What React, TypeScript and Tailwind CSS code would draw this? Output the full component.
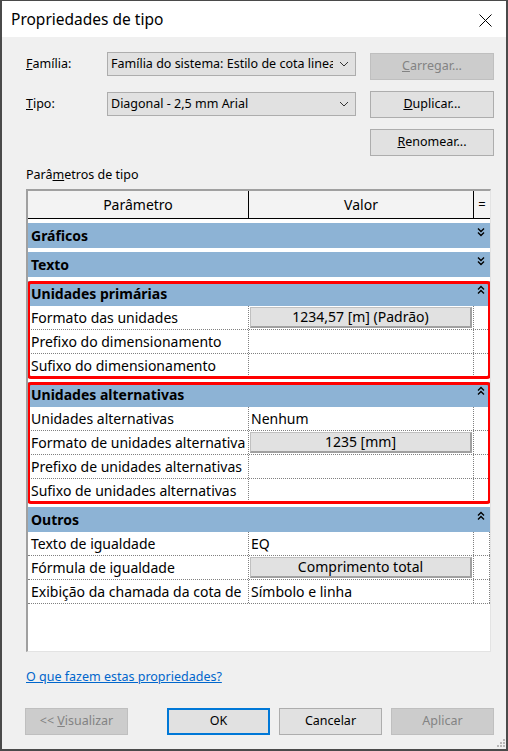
import React from 'react';

const font = { fontFamily: '"Segoe UI", "Noto Sans", sans-serif' };

type Row = { name: string; value?: string; button?: boolean };
type Group = { title: string; open: boolean; rows: Row[]; marked?: boolean };

// texts as the grid shows them (the narrow column cuts the long names)
const groups: Group[] = [
  { title: 'Gráficos', open: false, rows: [] },
  { title: 'Texto', open: false, rows: [] },
  {
    title: 'Unidades primárias',
    open: true,
    marked: true,
    rows: [
      { name: 'Formato das unidades', value: '1234,57 [m] (Padrão)', button: true },
      { name: 'Prefixo do dimensionamento' },
      { name: 'Sufixo do dimensionamento' },
    ],
  },
  {
    title: 'Unidades alternativas',
    open: true,
    marked: true,
    rows: [
      { name: 'Unidades alternativas', value: 'Nenhum' },
      { name: 'Formato de unidades alternativa', value: '1235 [mm]', button: true },
      { name: 'Prefixo de unidades alternativas' },
      { name: 'Sufixo de unidades alternativas' },
    ],
  },
  {
    title: 'Outros',
    open: true,
    rows: [
      { name: 'Texto de igualdade', value: 'EQ' },
      { name: 'Fórmula de igualdade', value: 'Comprimento total', button: true },
      { name: 'Exibição da chamada da cota de', value: 'Símbolo e linha' },
    ],
  },
];

const Chevrons = ({ up }: { up: boolean }) => (
  <svg width="8" height="10" viewBox="0 0 8 10" className="shrink-0">
    {up ? (
      <path d="M1 4.5 L4 1.5 L7 4.5 M1 8.5 L4 5.5 L7 8.5" fill="none" stroke="#000" strokeWidth="1.4" />
    ) : (
      <path d="M1 1.5 L4 4.5 L7 1.5 M1 5.5 L4 8.5 L7 5.5" fill="none" stroke="#000" strokeWidth="1.4" />
    )}
  </svg>
);

const Select = ({ text }: { text: string }) => (
  <div className="w-[249px] h-[24px] flex items-center bg-[#e1e1e1] border border-[#adadad] pl-[3px] pr-[6px]">
    <span className="flex-1 overflow-hidden whitespace-nowrap text-[12.5px] text-black">{text}</span>
    <svg width="10" height="6" viewBox="0 0 10 6" className="ml-[6px] shrink-0">
      <path d="M1 1 L5 5 L9 1" fill="none" stroke="#333" strokeWidth="1" />
    </svg>
  </div>
);

const Btn = ({ children, disabled, primary }: { children: React.ReactNode; disabled?: boolean; primary?: boolean }) => (
  <div
    className={`w-[103px] h-[27px] flex items-center justify-center text-[12.5px] ${
      disabled
        ? 'bg-[#cccccc] border border-[#bfbfbf] text-[#838383]'
        : primary
          ? 'bg-[#e1e1e1] border-2 border-[#0078d7] text-black'
          : 'bg-[#e1e1e1] border border-[#adadad] text-black'
    }`}
  >
    {children}
  </div>
);

const SideBtn = ({ children, disabled }: { children: React.ReactNode; disabled?: boolean }) => (
  <div
    className={`w-[124px] h-[27px] flex items-center justify-center text-[12.5px] ${
      disabled ? 'bg-[#cccccc] border border-[#bfbfbf] text-[#838383]' : 'bg-[#e1e1e1] border border-[#adadad] text-black'
    }`}
  >
    {children}
  </div>
);

const GroupBlock = ({ g }: { g: Group }) => (
  <div className="relative mt-[4px]">
    <div className="h-[25px] bg-[#8db3d5] flex items-start pl-[3px] pr-[5px]">
      <span className="flex-1 font-bold text-[14px] leading-[25px] text-black">{g.title}</span>
      <div className="pt-[4px]">
        <Chevrons up={g.open} />
      </div>
    </div>
    {g.rows.map((r) => (
      <div key={r.name} className="flex h-[24px] bg-white border-b border-dotted border-[#808080]">
        <div className="w-[221px] shrink-0 border-r border-dotted border-[#808080] pl-[3px] overflow-hidden whitespace-nowrap text-[14px] leading-[23px] text-black">
          {r.name}
        </div>
        <div className="w-[225px] shrink-0 border-r border-dotted border-[#808080] overflow-hidden whitespace-nowrap text-[14px] text-black">
          {r.button ? (
            <div className="mx-[1px] mt-[1px] h-[21px] bg-[#e1e1e1] border border-[#c0c0c0] border-r-2 border-b-2 border-r-[#a0a0a0] border-b-[#a0a0a0] flex items-center justify-center leading-none">
              {r.value}
            </div>
          ) : (
            <div className="pl-[2px] leading-[23px]">{r.value}</div>
          )}
        </div>
        <div className="flex-1 border-r border-dotted border-[#808080]" />
      </div>
    ))}
    {g.marked && (
      <div className="absolute top-0 bottom-[-1px] -left-px -right-px border-[3px] border-[#ff0000] rounded-[4px] pointer-events-none" />
    )}
  </div>
);

export default function App() {
  return (
    <div className="w-[508px] h-[751px] flex flex-col border-2 border-t border-[#4a4a4a] relative" style={font}>
      {/* Title bar */}
      <div className="h-[36px] bg-white flex items-center pl-[9px] pr-[14px] pt-[2px] shrink-0">
        <span className="flex-1 text-[15.5px] text-black">Propriedades de tipo</span>
        <svg width="13" height="13" viewBox="0 0 13 13">
          <path d="M0.5 0.5 L12.5 12.5 M12.5 0.5 L0.5 12.5" stroke="#000" strokeWidth="1" />
        </svg>
      </div>

      {/* Body */}
      <div className="flex-1 bg-[#f0f0f0] pl-[24px] pr-[12px] pt-[15px] flex flex-col">
        <div className="flex">
          <div className="flex flex-col">
            <div className="flex items-center h-[24px]">
              <span className="w-[81px] text-[12.5px] text-black">
                <u>F</u>amília:
              </span>
              <Select text="Família do sistema: Estilo de cota linear" />
            </div>
            <div className="flex items-center h-[24px] mt-[16px]">
              <span className="w-[81px] text-[12.5px] text-black">
                <u>T</u>ipo:
              </span>
              <Select text="Diagonal - 2,5 mm Arial" />
            </div>
          </div>
          <div className="ml-[14px] pt-[1px] flex flex-col gap-[11px]">
            <SideBtn disabled>
              <span>
                <u>C</u>arregar...
              </span>
            </SideBtn>
            <SideBtn>
              <span>
                <u>D</u>uplicar...
              </span>
            </SideBtn>
            <SideBtn>
              <span>
                <u>R</u>enomear...
              </span>
            </SideBtn>
          </div>
        </div>

        <div className="mt-[11px] text-[12.5px] leading-[16px] text-black">
          Parâ<u>m</u>etros de tipo
        </div>

        {/* Property grid */}
        <div className="mt-[6px] w-[465px] h-[463px] bg-white border-t-2 border-l-2 border-[#a0a0a0] border-r border-b border-r-[#e3e3e3] border-b-[#e3e3e3] flex flex-col overflow-hidden">
          <div className="flex h-[28px] shrink-0 bg-[#f3f3f3] border-b border-black text-[14px] text-black">
            <div className="w-[221px] border-r border-black flex items-center justify-center">Parâmetro</div>
            <div className="w-[225px] border-r border-black flex items-center justify-center">Valor</div>
            <div className="w-[16px] flex items-center justify-center text-[13px]">=</div>
          </div>
          {groups.map((g) => (
            <GroupBlock key={g.title} g={g} />
          ))}
        </div>

        <div className="mt-[17px] text-[12.5px] leading-[16px] text-[#0066cc] underline">O que fazem estas propriedades?</div>

        <div className="mt-[23px] flex -ml-px">
          <Btn disabled>
            <span>
              &lt;&lt; <u>V</u>isualizar
            </span>
          </Btn>
          <div className="ml-[39px]">
            <Btn primary>OK</Btn>
          </div>
          <div className="ml-[9px]">
            <Btn>Cancelar</Btn>
          </div>
          <div className="ml-[9px]">
            <Btn disabled>Aplicar</Btn>
          </div>
        </div>
      </div>

      {/* Resize grip */}
      <svg width="10" height="10" viewBox="0 0 10 10" className="absolute right-[1px] bottom-[1px]">
        {[
          [8, 0],
          [8, 3],
          [5, 3],
          [8, 6],
          [5, 6],
          [2, 6],
        ].map(([x, y]) => (
          <rect key={`${x}-${y}`} x={x} y={y + 1} width="2" height="2" fill="#b8b8b8" />
        ))}
      </svg>
    </div>
  );
}
